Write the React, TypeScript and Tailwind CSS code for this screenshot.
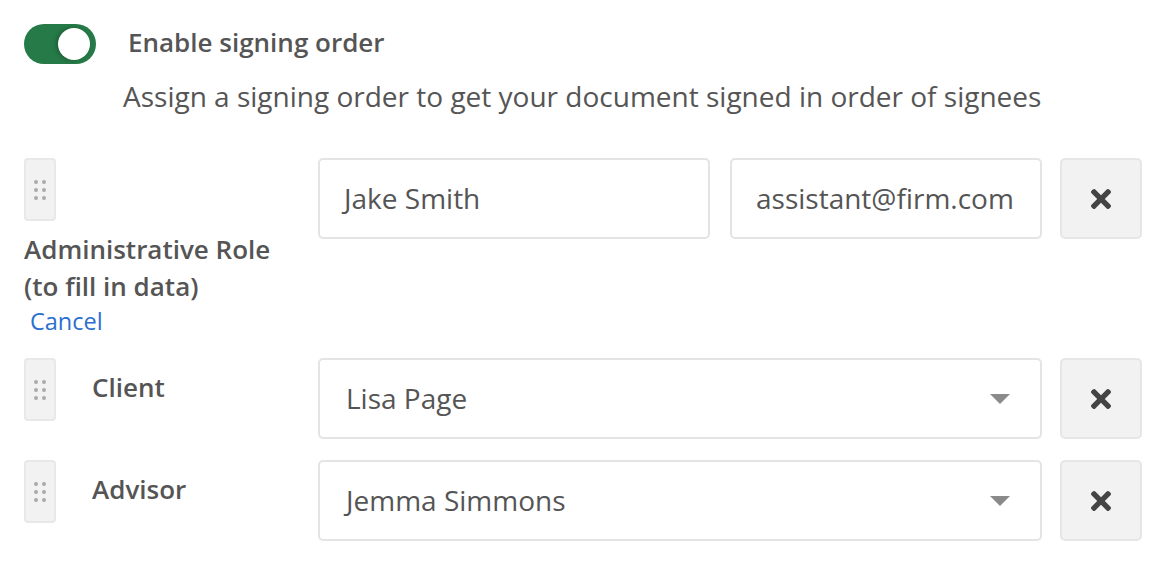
import { FaTimes } from "react-icons/fa";

const font = { fontFamily: '"Open Sans", "Noto Sans", sans-serif' };

function Handle() {
  return (
    <div className="flex h-[63px] w-[32px] shrink-0 items-center justify-center rounded-[4px] border-2 border-[#e8e8e8] bg-[#f2f2f2]">
      <div className="grid grid-cols-2 gap-x-[4px] gap-y-[4px]">
        {Array.from({ length: 6 }).map((_, i) => (
          <span key={i} className="block h-[4px] w-[4px] rounded-full bg-[#aaaaaa]" />
        ))}
      </div>
    </div>
  );
}

function RemoveButton() {
  return (
    <button className="flex h-[81px] w-[82px] shrink-0 items-center justify-center rounded-[5px] border-2 border-[#e6e6e6] bg-[#f2f2f2] text-[#444]">
      <FaTimes className="h-[30px] w-[20px]" />
    </button>
  );
}

function Field({ value, className }: { value: string; className: string }) {
  return (
    <div className={`flex h-[81px] items-center rounded-[5px] border-2 border-[#e4e4e4] bg-white px-[24px] pb-[2px] text-[28px] text-[#555] ${className}`}>
      {value}
    </div>
  );
}

function Select({ value }: { value: string }) {
  return (
    <div className="flex h-[81px] w-[724px] items-center justify-between rounded-[5px] border-2 border-[#e4e4e4] bg-white pl-[26px] pr-[30px] text-[28px] text-[#555]">
      <span className="pb-[2px]">{value}</span>
      <span className="h-0 w-0 border-x-[10px] border-t-[10px] border-x-transparent border-t-[#8a8a8a]" />
    </div>
  );
}

export default function App() {
  const rows = [
    { role: "Client", person: "Lisa Page" },
    { role: "Advisor", person: "Jemma Simmons" },
  ];
  return (
    <div className="min-h-[572px] bg-white px-[24px] pt-[24px]" style={font}>
      <div className="flex items-center">
        <div className="relative h-[40px] w-[72px] rounded-full bg-[#267a47]">
          <span className="absolute right-[6px] top-[4px] h-[32px] w-[32px] rounded-full bg-white shadow-[-2px_0_4px_rgba(0,0,0,0.25)]" />
        </div>
        <span className="ml-[32px] -mt-[4px] text-[26px] font-semibold leading-[36px] text-[#555]">Enable signing order</span>
      </div>
      <p className="ml-[99px] mt-[13px] text-[28px] leading-[38px] text-[#555]">
        Assign a signing order to get your document signed in order of signees
      </p>

      <div className="mt-[43px] flex flex-col gap-[21px]">
        <div className="flex">
          <div className="flex w-[294px] flex-col">
            <Handle />
            <div className="mt-[10px] text-[26px] font-semibold leading-[37px] text-[#555]">
              Administrative Role
              <br />
              (to fill in data)
            </div>
            <a className="ml-[6px] text-[23.5px] leading-[32px] text-[#2b6fcf]">Cancel</a>
          </div>
          <Field value="Jake Smith" className="w-[392px]" />
          <Field value="assistant@firm.com" className="ml-[20px] w-[312px]" />
          <div className="ml-[18px]">
            <RemoveButton />
          </div>
        </div>

        {rows.map((r) => (
          <div key={r.role} className="flex items-start">
            <div className="flex w-[294px]">
              <Handle />
              <span className="ml-[36px] mt-[11px] text-[26px] font-semibold leading-[36px] text-[#555]">{r.role}</span>
            </div>
            <Select value={r.person} />
            <div className="ml-[18px]">
              <RemoveButton />
            </div>
          </div>
        ))}
      </div>
    </div>
  );
}
